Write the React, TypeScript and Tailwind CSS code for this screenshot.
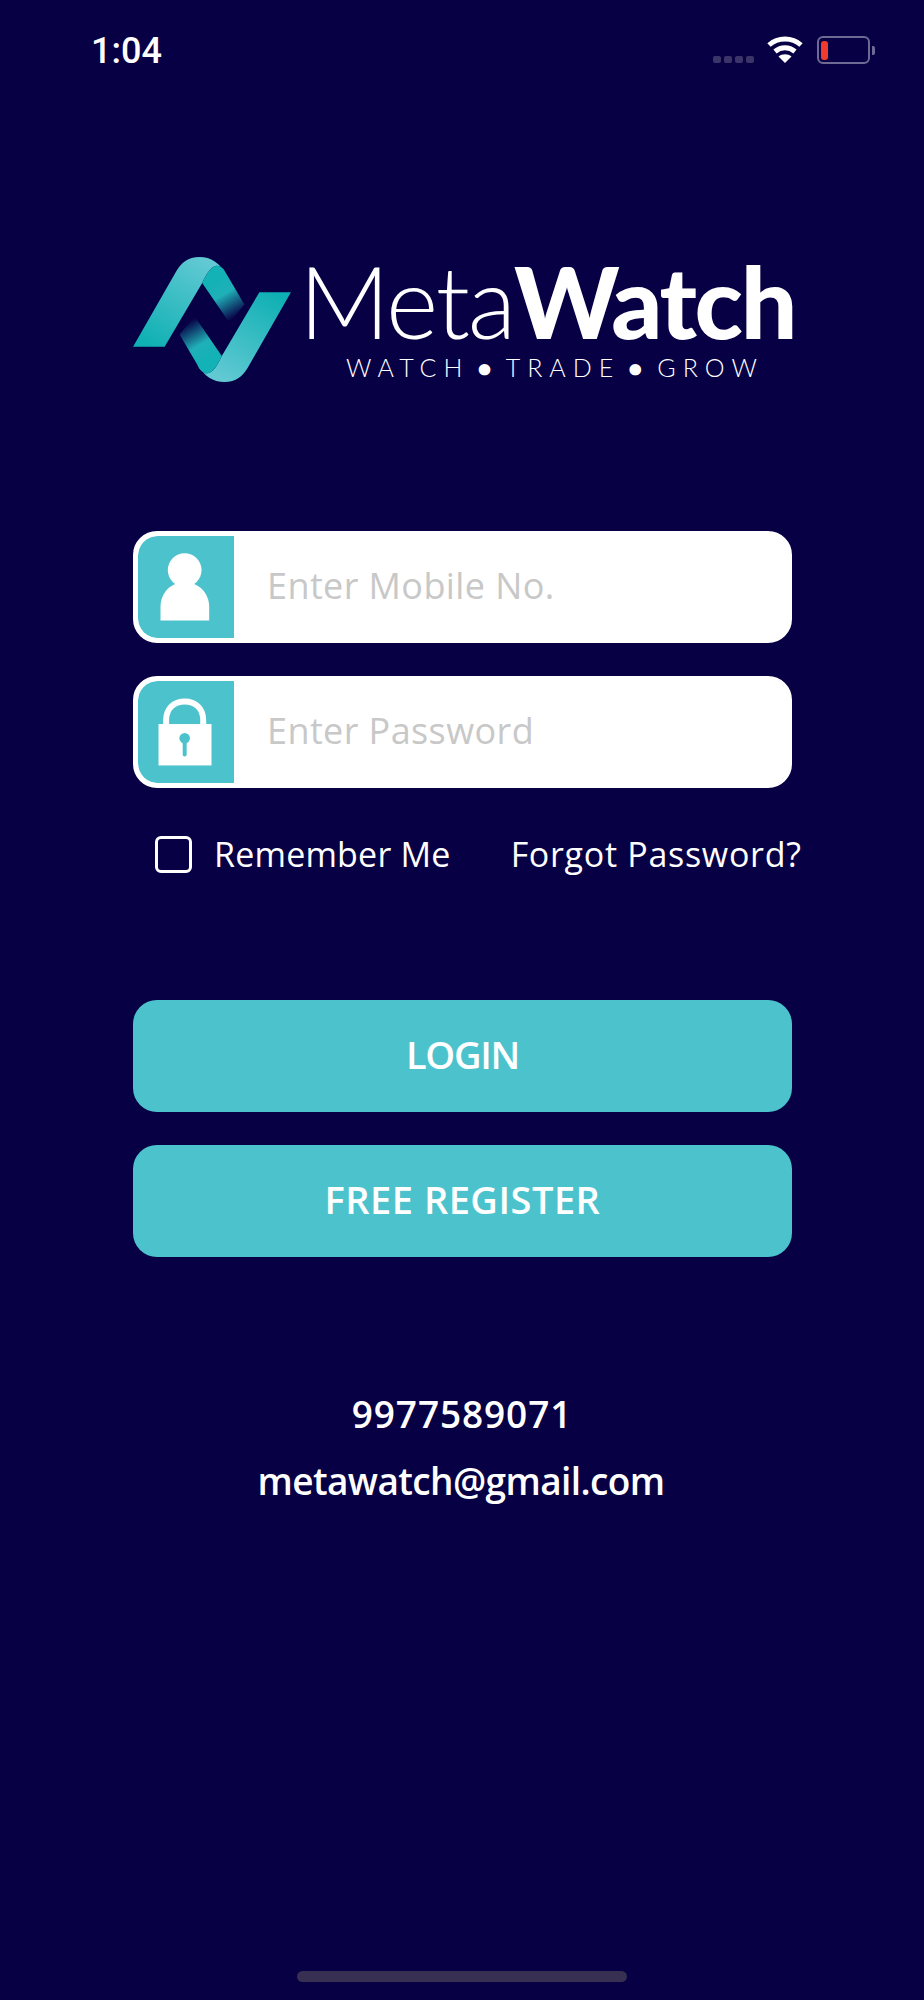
const SANS = "font-['Open_Sans',sans-serif]"

function LogoMark() {
  const ribbon = (
    <>
      <path fill="url(#lightBand)" d="M40 322 L135 322 L248 130 C262 100 275 80 292 78 C305 78 315 90 322 105 C300 70 275 52 240 52 C205 52 185 70 170 95 Z" />
      <path fill="url(#foldBand)" d="M248 130 C262 100 275 80 292 78 C305 78 315 90 322 105 L375 195 L330 250 Z" />
    </>
  )
  return (
    <svg width="158" height="125" viewBox="40 52 475 376" className="shrink-0">
      <defs>
        <linearGradient id="lightBand" gradientUnits="userSpaceOnUse" x1="90" y1="322" x2="250" y2="60">
          <stop offset="0" stopColor="#0eb0b3" />
          <stop offset="1" stopColor="#62c9d3" />
        </linearGradient>
        <linearGradient id="foldBand" gradientUnits="userSpaceOnUse" x1="285" y1="120" x2="352" y2="232">
          <stop offset="0" stopColor="#12b2b6" />
          <stop offset="0.4" stopColor="#1fb0b8" />
          <stop offset="1" stopColor="#070045" />
        </linearGradient>
      </defs>
      {ribbon}
      <g transform="rotate(180 277.5 240)">{ribbon}</g>
    </svg>
  )
}

function UserIcon() {
  return (
    <svg viewBox="0 0 288 308" className="h-full w-full">
      <circle cx="140" cy="103" r="51" fill="#fff" />
      <path fill="#fff" d="M67 255 L67 215 C67 170 100 140 140 140 C180 140 214 170 214 215 L214 255 Z" />
    </svg>
  )
}

function LockIcon() {
  return (
    <svg viewBox="0 0 288 308" className="h-full w-full">
      <path fill="none" stroke="#fff" strokeWidth="18" d="M84 135 L84 118 C84 82 108 62 140 62 C172 62 196 82 196 118 L196 135" />
      <rect x="61" y="130" width="160" height="125" fill="#fff" />
      <circle cx="140" cy="173" r="16" fill="#4cc3cc" />
      <path stroke="#4cc3cc" strokeWidth="12" strokeLinecap="round" d="M140 175 L140 222" />
    </svg>
  )
}

function Field({ icon, placeholder }: { icon: React.ReactNode; placeholder: string }) {
  return (
    <div className="flex h-[112px] w-[659px] overflow-hidden rounded-[24px] border-[5px] border-white bg-white">
      <div className="h-full w-[96px] shrink-0 rounded-l-[20px] bg-[#4cc3cc]">{icon}</div>
      <div className={`flex items-center pb-[2px] pl-[33px] text-[36px] tracking-[0.4px] text-[#c8c8c8] ${SANS}`}>{placeholder}</div>
    </div>
  )
}

function WideButton({ label, className }: { label: string; className: string }) {
  return (
    <div className={`flex h-[112px] w-[659px] items-center justify-center rounded-[24px] bg-[#4cc3cc] pb-[3px] text-[38px] font-semibold text-white ${SANS} ${className}`}>
      {label}
    </div>
  )
}

export default function App() {
  return (
    <div className="flex h-[2000px] w-[924px] flex-col overflow-hidden bg-[#070045]">
      <div className="flex h-[100px] items-start justify-between pl-[91px] pr-[49px] pt-[29px]">
        <span className="mt-[1px] font-['Roboto',sans-serif] text-[36px] font-medium leading-[42px] text-white">1:04</span>
        <div className="flex items-start pt-[7px]">
          <div className="mr-[13px] mt-[20px] flex gap-[3px]">
            <span className="h-[7px] w-[8px] rounded-[2px] bg-[#3a3468]" />
            <span className="h-[7px] w-[8px] rounded-[2px] bg-[#3a3468]" />
            <span className="h-[7px] w-[8px] rounded-[2px] bg-[#3a3468]" />
            <span className="h-[7px] w-[8px] rounded-[2px] bg-[#3a3468]" />
          </div>
          <svg width="36" height="27" viewBox="0 0 36 27" fill="none" stroke="#fff" strokeWidth="5" className="mr-[14px]">
            <path d="M2 9 C11 1 25 1 34 9" />
            <path d="M8 15.5 C14 10.5 22 10.5 28 15.5" />
            <path d="M18 27 L11.5 20.5 C15 17.5 21 17.5 24.5 20.5 Z" fill="#fff" stroke="none" />
          </svg>
          <div className="flex items-center">
            <div className="flex h-[28px] w-[53px] items-center rounded-[6px] border-[2px] border-[#6f6a93] pl-[2px]">
              <span className="h-[19px] w-[7px] rounded-[3px] bg-[#ef3b2d]" />
            </div>
            <span className="ml-[2px] h-[9px] w-[3px] rounded-r-[2px] bg-[#6f6a93]" />
          </div>
        </div>
      </div>

      <div className="ml-[133px] mt-[157px] flex h-[125px] items-start gap-[8px]">
        <LogoMark />
        <div className="-mt-[2px] flex flex-col">
          <div className="whitespace-nowrap font-['Lato',sans-serif] text-[100px] leading-[90px] tracking-[-2.2px] text-white">
            <span className="inline-block font-light">Meta</span>
            <span className="inline-block font-black">Watch</span>
          </div>
          <div className="mt-[9px] whitespace-nowrap pl-[47px] font-['Lato',sans-serif] text-[25px] font-light leading-[26px] tracking-[7px] text-white [word-spacing:-6px]">
            WATCH <span className="font-black">•</span> TRADE <span className="font-black">•</span> GROW
          </div>
        </div>
      </div>

      <div className="ml-[133px] mt-[149px] flex flex-col gap-[33px]">
        <Field icon={<UserIcon />} placeholder="Enter Mobile No." />
        <Field icon={<LockIcon />} placeholder="Enter Password" />
      </div>

      <div className={`ml-[155px] mt-[48px] flex h-[37px] items-center text-[34px] text-white ${SANS}`}>
        <span className="h-[37px] w-[37px] rounded-[6px] border-[3px] border-white" />
        <span className="ml-[22px] tracking-[0.2px]">Remember Me</span>
        <span className="ml-[60px] whitespace-nowrap tracking-[0.7px]">Forgot Password?</span>
      </div>

      <div className="ml-[133px] mt-[127px] flex flex-col gap-[33px]">
        <WideButton label="LOGIN" className="tracking-[-1.3px]" />
        <WideButton label="FREE REGISTER" className="tracking-[0.5px]" />
      </div>

      <div className={`mt-[133px] flex flex-col items-center gap-[19px] text-[37px] font-semibold leading-[48px] text-white ${SANS}`}>
        <span className="tracking-[0.9px]">9977589071</span>
        <span className="pr-[2px] tracking-[-0.6px]">metawatch@gmail.com</span>
      </div>

      <div className="mx-auto mt-auto mb-[18px] h-[11px] w-[330px] rounded-full bg-[#373052]" />
    </div>
  )
}
